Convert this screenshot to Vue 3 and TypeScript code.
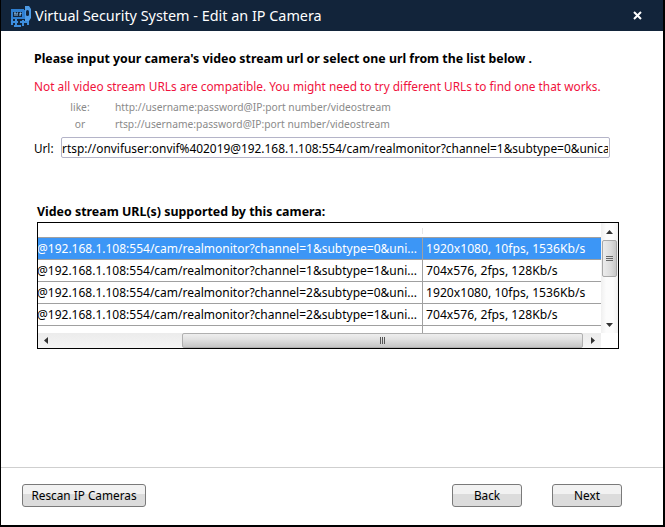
<script setup lang="ts">
interface StreamRow {
  url: string
  info: string
}
const rows: StreamRow[] = [
  { url: '@192.168.1.108:554/cam/realmonitor?channel=1&subtype=0&uni...', info: '1920x1080, 10fps, 1536Kb/s' },
  { url: '@192.168.1.108:554/cam/realmonitor?channel=1&subtype=1&uni...', info: '704x576, 2fps, 128Kb/s' },
  { url: '@192.168.1.108:554/cam/realmonitor?channel=2&subtype=0&uni...', info: '1920x1080, 10fps, 1536Kb/s' },
  { url: '@192.168.1.108:554/cam/realmonitor?channel=2&subtype=1&uni...', info: '704x576, 2fps, 128Kb/s' },
]
const url = 'rtsp://onvifuser:onvif%402019@192.168.1.108:554/cam/realmonitor?channel=1&subtype=0&unicast=true'
</script>

<template>
  <div class="win">
    <header class="title">
      <svg class="logo" width="22" height="22" viewBox="0 0 22 22">
        <path d="M1 4h13v1h2v9H1z" fill="#2f7fd0" />
        <rect x="3" y="7" width="9" height="5" fill="#12243a" />
        <path d="M4 8h2M5 8v3M7 8h1M7 8v3M10 8v3M10 8h1v1h-1" stroke="#8cc4f4" stroke-width="1" fill="none" />
        <path d="M15 1h4l2 3v9l-2 3h-4z" fill="#4d9be6" />
        <rect x="16" y="5" width="3" height="6" rx="1.5" fill="#12243a" />
        <path d="M2 14v6M2 17h6M6 14v6M4 21h7M10 17h8M13 15v6M18 16v4" stroke="#3d8ddc" stroke-width="2" fill="none" />
      </svg>
      <span class="title-text">Virtual Security System - Edit an IP Camera</span>
      <svg class="close" width="9" height="9" viewBox="0 0 9 9">
        <path d="M1 1l7 7M8 1l-7 7" stroke="#fff" stroke-width="2" />
      </svg>
    </header>

    <main class="body">
      <p class="lead">Please input your camera's video stream url or select one url from the list below .</p>
      <p class="warn">Not all video stream URLs are compatible. You might need to try different URLs to find one that works.</p>
      <div class="hints">
        <div class="hint"><span class="hint-k">like:</span><span>http://username:password@IP:port number/videostream</span></div>
        <div class="hint"><span class="hint-k">or</span><span>rtsp://username:password@IP:port number/videostream</span></div>
      </div>
      <div class="url-row">
        <label class="url-label">Url:</label>
        <div class="url-input"><span class="url-value">{{ url }}</span></div>
      </div>

      <h2 class="list-title">Video stream URL(s) supported by this camera:</h2>
      <div class="table">
        <div class="upper">
          <div class="rows">
            <div class="thead"><span class="head-div"></span></div>
            <div v-for="(r, i) in rows" :key="i" class="row" :class="{ sel: i === 0 }">
              <span class="c1">{{ r.url }}</span>
              <span class="c2">{{ r.info }}</span>
            </div>
            <div class="row stub"><span class="c1"></span><span class="c2"></span></div>
          </div>
          <div class="vbar">
            <svg class="arrow" width="7" height="4" viewBox="0 0 7 4"><path d="M3.5 0L7 4H0z" fill="#333" /></svg>
            <div class="vthumb"><span class="grip"></span><span class="grip"></span><span class="grip"></span></div>
            <svg class="arrow down" width="7" height="4" viewBox="0 0 7 4"><path d="M0 0h7L3.5 4z" fill="#333" /></svg>
          </div>
        </div>
        <div class="hbar">
          <div class="htrack">
            <svg class="harrow" width="4" height="7" viewBox="0 0 4 7"><path d="M4 0v7L0 3.5z" fill="#333" /></svg>
            <div class="hthumb"><span class="hgrip"></span><span class="hgrip"></span><span class="hgrip"></span></div>
            <svg class="harrow" width="4" height="7" viewBox="0 0 4 7"><path d="M0 0v7l4-3.5z" fill="#333" /></svg>
          </div>
          <div class="corner"></div>
        </div>
      </div>
    </main>

    <footer class="foot">
      <button class="btn rescan">Rescan IP Cameras</button>
      <div class="spacer"></div>
      <button class="btn nav">Back</button>
      <button class="btn nav">Next</button>
    </footer>
  </div>
</template>

<style>
html, body { margin: 0; background: #000; }
</style>

<style scoped>
.win {
  width: 665px;
  height: 527px;
  box-sizing: border-box;
  border-left: 1px solid #000;
  border-right: 2px solid #000;
  border-bottom: 2px solid #000;
  background: #fff;
  display: flex;
  flex-direction: column;
  font-family: "Noto Sans", "DejaVu Sans", sans-serif;
  color: #000;
  overflow: hidden;
}
.title {
  height: 31px;
  flex: none;
  background: #12243a;
  display: flex;
  align-items: center;
  padding: 0 21px 0 9px;
  color: #fff;
}
.logo { flex: none; margin-right: 3px; }
.title-text { font-size: 14.4px; flex: 1; white-space: nowrap; }
.close { flex: none; }
.body {
  flex: 1;
  padding: 20px 0 0 32px;
  min-height: 0;
}
.lead {
  margin: 0;
  height: 16px;
  line-height: 16px;
  padding-left: 1px;
  font-size: 12.35px;
  font-weight: 700;
  white-space: nowrap;
}
.warn {
  margin: 11px 0 0;
  height: 16px;
  line-height: 16px;
  padding-left: 1px;
  font-size: 11.85px;
  color: #f0123c;
  white-space: nowrap;
}
.hints { margin-top: 5px; font-size: 10.27px; color: #8a8a8a; }
.hint { display: flex; height: 17px; line-height: 17px; white-space: nowrap; }
.hint-k { width: 50px; margin-left: 22px; margin-right: 10px; text-align: center; flex: none; }
.url-row { display: flex; align-items: center; margin-top: 4px; height: 21px; }
.url-label { width: 27px; padding: 1px 0 0 1px; font-size: 11.7px; flex: none; }
.url-input {
  width: 549px;
  height: 21px;
  box-sizing: border-box;
  border: 1px solid #b4b4c8;
  border-radius: 2px;
  padding: 0 1px 0 0;
  line-height: 20px;
  font-size: 11.9px;
  overflow: hidden;
  white-space: nowrap;
}
.url-value { display: block; overflow: hidden; }
.list-title {
  margin: 46px 0 0;
  padding-left: 4px;
  height: 16px;
  line-height: 16px;
  font-size: 12.4px;
  font-weight: 700;
  white-space: nowrap;
}
.table {
  margin: 2px 0 0 4px;
  width: 582px;
  height: 127px;
  box-sizing: border-box;
  border: 1px solid #000;
  display: flex;
  flex-direction: column;
  font-size: 12px;
}
.upper { flex: 1; display: flex; min-height: 0; }
.rows { flex: 1; min-width: 0; overflow: hidden; }
.thead { height: 14px; border-bottom: 1px solid #a0a0a0; display: flex; box-sizing: content-box; }
.head-div { width: 384px; border-right: 1px solid #e6e6e6; height: 6px; margin-top: 5px; }
.row { display: flex; height: 21px; border-bottom: 1px solid #a0a0a0; line-height: 22px; white-space: nowrap; }
.row.sel { background: #3c96f6; color: #fff; }
.row.stub { height: 8px; border-bottom: 0; }
.c1 { width: 384px; flex: none; overflow: hidden; border-right: 1px solid #a0a0a0; box-sizing: content-box; text-indent: -1px; }
.c2 { flex: 1; padding-left: 3px; font-size: 12.15px; }
.vbar {
  width: 17px;
  flex: none;
  background: linear-gradient(90deg, #f0f0f0, #fcfcfc 30%, #fcfcfc 70%, #f0f0f0);
  display: flex;
  flex-direction: column;
  align-items: center;
}
.arrow { margin-top: 7px; flex: none; }
.arrow.down { margin-top: auto; margin-bottom: 6px; }
.vthumb {
  margin-top: 6px;
  width: 15px;
  height: 37px;
  box-sizing: border-box;
  border: 1px solid #a8a8a8;
  border-radius: 2px;
  background: linear-gradient(90deg, #ececec, #dcdcdc 60%, #c8c8c8);
  display: flex;
  flex-direction: column;
  align-items: center;
  justify-content: center;
  gap: 1px;
}
.grip { width: 7px; height: 1px; background: #666; }
.hbar { height: 15px; flex: none; display: flex; }
.htrack {
  flex: 1;
  min-width: 0;
  display: flex;
  align-items: center;
  background: linear-gradient(#ececec, #f4f4f4);
}
.harrow { flex: none; margin: 0 5px; }
.htrack > .harrow:first-child { margin: 0 0 0 6px; }
.htrack > .harrow:last-child { margin: 0 0 0 8px; }
.hthumb {
  margin-left: 134px;
  width: 401px;
  height: 15px;
  box-sizing: border-box;
  border: 1px solid #b0b0b0;
  border-radius: 2px;
  background: linear-gradient(#eeeeee, #e2e2e2 40%, #c6c6c6);
  display: flex;
  align-items: center;
  justify-content: center;
  gap: 1px;
}
.hgrip { width: 1px; height: 7px; background: #555; }
.corner { width: 17px; flex: none; background: #fff; }
.foot {
  height: 58px;
  flex: none;
  box-sizing: border-box;
  border-top: 1px solid #cfcfcf;
  padding: 16px 41px 0 21px;
  display: flex;
  align-items: flex-start;
  gap: 30px;
}
.spacer { flex: 1; }
.btn {
  height: 23px;
  box-sizing: border-box;
  border: 1px solid #7a7a7a;
  border-radius: 3px;
  background: linear-gradient(#f2f2f2 0, #f2f2f2 45%, #dcdcdc 45%, #dcdcdc 100%);
  font: 11.8px "Noto Sans", "DejaVu Sans", sans-serif;
  color: #000;
  padding: 0 0 1px;
}
.rescan { width: 124px; }
.nav { width: 70px; }
</style>
